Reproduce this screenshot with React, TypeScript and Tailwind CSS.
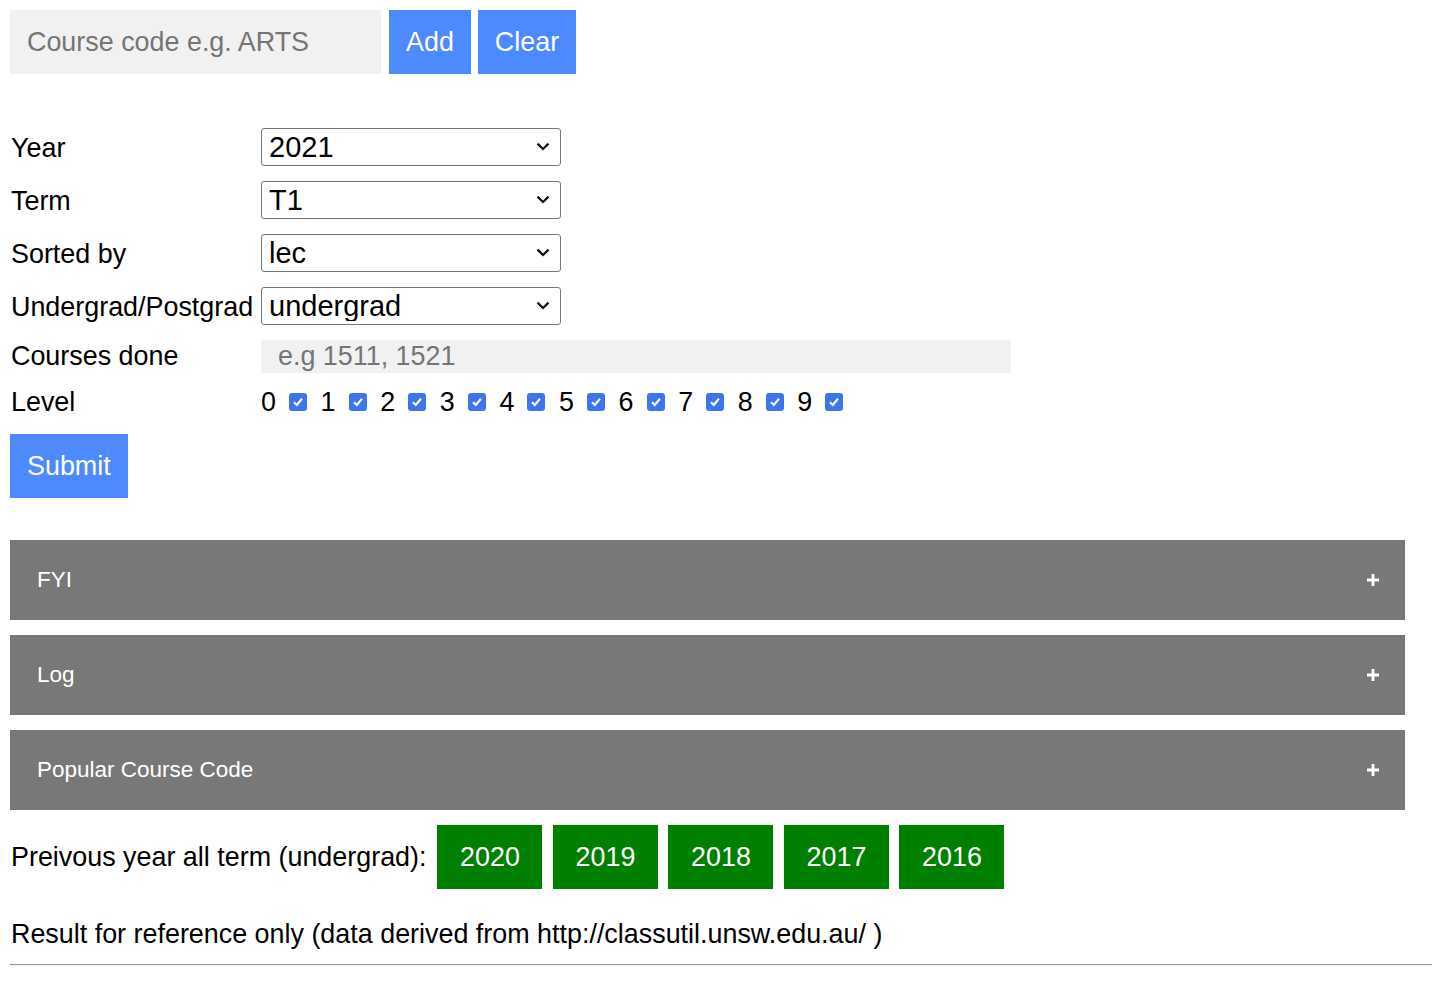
import React from "react";

const font = "font-['Liberation_Sans',Arial,sans-serif]";

function Select({ value }: { value: string }) {
  return (
    <div className="relative h-[38px] w-[300px]">
      <select
        defaultValue={value}
        className="h-full w-full appearance-none rounded-[3px] border border-[#767676] bg-white pl-[7px] pt-[2px] text-[29px] leading-none text-black outline-none"
      >
        <option value={value}>{value}</option>
      </select>
      <svg
        aria-hidden="true"
        className="pointer-events-none absolute right-[11px] top-[14px] h-[9px] w-[14px]"
        viewBox="0 0 14 9"
        fill="none"
        stroke="#111"
        strokeWidth="2.2"
      >
        <path d="M1.5 1.6 7 7 12.5 1.6" />
      </svg>
    </div>
  );
}

function Check() {
  return (
    <span className="inline-flex h-[18px] w-[18px] items-center justify-center rounded-[3px] bg-[#3f74f1]">
      <svg aria-hidden="true" className="h-[12px] w-[12px]" viewBox="0 0 12 12" fill="none" stroke="white" strokeWidth="2.2">
        <path d="M2 6.3 4.8 9 10 2.8" />
      </svg>
    </span>
  );
}

function Row({ label, h, pad, children }: { label: string; h: string; pad?: boolean; children: React.ReactNode }) {
  return (
    <div className={`flex items-center ${h}`}>
      <div className={`w-[251px] pl-px text-[26.9px] leading-none ${pad ? "pt-[4px]" : ""}`}>{label}</div>
      {children}
    </div>
  );
}

function Accordion({ title }: { title: string }) {
  return (
    <div className="flex h-[80px] w-[1395px] items-center justify-between bg-[#787878] pl-[27px] pr-[26px] text-[22.5px] text-white">
      <span>{title}</span>
      <svg aria-hidden="true" className="h-[12px] w-[12px]" viewBox="0 0 12 12" fill="white">
        <path d="M4.6 0h2.8v4.6H12v2.8H7.4V12H4.6V7.4H0V4.6h4.6z" />
      </svg>
    </div>
  );
}

export default function App() {
  const years = ["2020", "2019", "2018", "2017", "2016"];
  return (
    <div className={`${font} min-h-[992px] bg-white pl-[10px] pt-[10px] text-black`}>
      <div className="flex h-[64px]">
        <input
          placeholder="Course code e.g. ARTS"
          className="h-full w-[371px] bg-[#f1f1f1] px-[17px] text-[26.9px] text-black outline-none placeholder:text-[#757575]"
        />
        <button className="ml-[8px] h-full bg-[#4d8aff] px-[17px] text-[26.9px] text-white">Add</button>
        <button className="ml-[7px] h-full bg-[#4d8aff] px-[17px] text-[26.9px] text-white">Clear</button>
      </div>

      <div className="mt-[46px]">
        <Row label="Year" h="h-[53px]" pad>
          <Select value="2021" />
        </Row>
        <Row label="Term" h="h-[53px]" pad>
          <Select value="T1" />
        </Row>
        <Row label="Sorted by" h="h-[53px]" pad>
          <Select value="lec" />
        </Row>
        <Row label="Undergrad/Postgrad" h="h-[53px]" pad>
          <Select value="undergrad" />
        </Row>
        <Row label="Courses done" h="h-[48px]">
          <input
            placeholder="e.g 1511, 1521"
            className="h-[33px] w-[750px] bg-[#f1f1f1] px-[17px] text-[26.9px] outline-none placeholder:text-[#757575]"
          />
        </Row>
        <Row label="Level" h="h-[44px]">
          <div className="flex items-center text-[26.9px] leading-none">
            {Array.from({ length: 10 }, (_, i) => (
              <div key={i} className="flex w-[59.6px] items-center">
                <span className="w-[15px]">{i}</span>
                <span className="ml-[13px] flex">
                  <Check />
                </span>
              </div>
            ))}
          </div>
        </Row>
      </div>

      <button className="mt-[10px] h-[64px] bg-[#4d8aff] px-[17px] text-[26.9px] text-white">Submit</button>

      <div className="mt-[42px] flex flex-col gap-[15px]">
        <Accordion title="FYI" />
        <Accordion title="Log" />
        <Accordion title="Popular Course Code" />
      </div>

      <div className="mt-[15px] flex h-[64px] items-center text-[26.9px]">
        <span className="pl-px">Preivous year all term (undergrad):</span>
        <div className="ml-[11px] flex h-full gap-[10.5px]">
          {years.map((y) => (
            <button key={y} className="h-full w-[105px] bg-[#008000] text-white">
              {y}
            </button>
          ))}
        </div>
      </div>

      <p className="mt-[30px] pl-px text-[26.9px] leading-[31px]">
        Result for reference only (data derived from http://classutil.unsw.edu.au/ )
      </p>
      <hr className="mt-[14px] border-t border-b border-t-[#9a9a9a] border-b-[#eeeeee]" />
    </div>
  );
}
